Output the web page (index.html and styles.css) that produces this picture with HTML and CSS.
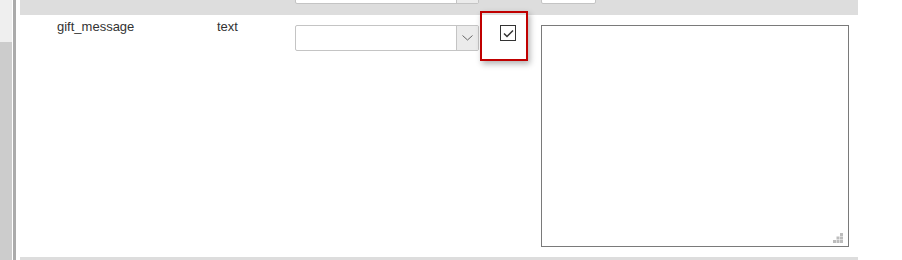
FILE: index.html
```html
<!DOCTYPE html>
<html lang="en">
<head>
    <meta charset="UTF-8">
    <meta name="viewport" content="width=device-width, initial-scale=1.0">
    <title>Attributes</title>
    <link rel="stylesheet" href="styles.css">
</head>
<body>
    <div class="page">
        <div class="sidebar">
            <div class="sidebar-top"></div>
            <div class="sidebar-bottom"></div>
        </div>
        <div class="divider"></div>
        <div class="content">
            <!-- previous row, scrolled mostly out of view -->
            <div class="row-prev">
                <div class="select select-stub">
                    <span class="select-arrow"></span>
                </div>
                <div class="input-stub"></div>
            </div>

            <div class="row-field">
                <div class="cell cell-name">gift_message</div>
                <div class="cell cell-type">text</div>
                <div class="cell cell-select">
                    <div class="select">
                        <span class="select-arrow">
                            <svg width="11" height="6" viewBox="0 0 11 6"><path d="M0.5 0.5 L5.5 5 L10.5 0.5" fill="none" stroke="#666" stroke-width="1"/></svg>
                        </span>
                    </div>
                </div>
                <div class="cell cell-check">
                    <div class="highlight"></div>
                    <div class="checkbox">
                        <svg width="14" height="14" viewBox="0 0 14 14"><path d="M3 7.5 L6 10.5 L12 4.5" fill="none" stroke="#333" stroke-width="1.5"/></svg>
                    </div>
                </div>
                <div class="cell cell-text">
                    <div class="textarea">
                        <svg class="grip" width="10" height="10" viewBox="0 0 10 10">
                            <rect x="7" y="0" width="3" height="3" fill="#bdbdbd"/>
                            <rect x="3.5" y="3.5" width="3" height="3" fill="#bdbdbd"/>
                            <rect x="7" y="3.5" width="3" height="3" fill="#bdbdbd"/>
                            <rect x="0" y="7" width="3" height="3" fill="#bdbdbd"/>
                            <rect x="3.5" y="7" width="3" height="3" fill="#bdbdbd"/>
                            <rect x="7" y="7" width="3" height="3" fill="#bdbdbd"/>
                        </svg>
                    </div>
                </div>
            </div>

            <div class="row-sep"></div>
        </div>
    </div>
</body>
</html>
```

FILE: styles.css
```css
body {
    font-family: "Liberation Sans", Arial, sans-serif;
    font-size: 13px;
    color: #333;
    background-color: #fff;
    margin: 0;
    padding: 0;
}
.page {
    display: flex;
    height: 260px;
    overflow: hidden;
}
.sidebar {
    width: 12px;
    display: flex;
    flex-direction: column;
}
.sidebar-top {
    height: 42px;
    background: #efefef;
}
.sidebar-bottom {
    flex: 1;
    background: #cccccc;
}
.divider {
    width: 3px;
    margin-left: 1px;
    background: #ababab;
}
.content {
    width: 838px;
    margin-left: 4px;
}
.row-prev {
    height: 15px;
    background: #dddddd;
    display: flex;
    align-items: flex-end;
    overflow: hidden;
}
.select {
    position: relative;
    box-sizing: border-box;
    width: 184px;
    height: 26px;
    background: #fff;
    border: 1px solid #c4c4c4;
    border-radius: 2px;
}
.select-arrow {
    position: absolute;
    top: 0;
    right: 0;
    bottom: 0;
    width: 21px;
    background: #ebebeb;
    border-left: 1px solid #c4c4c4;
    display: flex;
    align-items: center;
    justify-content: center;
}
.select-stub {
    margin-left: 275px;
    margin-bottom: 11px;
    flex-shrink: 0;
}
.input-stub {
    box-sizing: border-box;
    width: 55px;
    height: 26px;
    margin-left: 62px;
    margin-bottom: 11px;
    background: #fff;
    border: 1px solid #c4c4c4;
    border-radius: 2px;
    flex-shrink: 0;
}
.row-field {
    display: flex;
    padding: 4px 0 10px;
    line-height: 15px;
}
.cell-name {
    width: 160px;
    padding-left: 37px;
}
.cell-type {
    width: 78px;
}
.cell-select {
    width: 185px;
    padding-top: 6px;
}
.cell-check {
    position: relative;
    width: 61px;
    padding-top: 6px;
}
.highlight {
    position: absolute;
    left: 0;
    top: -8px;
    width: 48px;
    height: 50px;
    box-sizing: border-box;
    border: 2px solid #c00000;
    box-shadow: 2px 3px 6px rgba(0, 0, 0, 0.3);
}
.checkbox {
    box-sizing: border-box;
    width: 16px;
    height: 16px;
    margin-left: 20px;
    border: 1px solid #333;
    background: #fff;
    display: flex;
    align-items: center;
    justify-content: center;
}
.cell-text {
    padding-top: 6px;
}
.textarea {
    position: relative;
    box-sizing: border-box;
    width: 308px;
    height: 222px;
    border: 1px solid #7a7a7a;
    background: #fff;
}
.grip {
    position: absolute;
    right: 5px;
    bottom: 3px;
}
.row-sep {
    height: 4px;
    background: #dddddd;
}
```
